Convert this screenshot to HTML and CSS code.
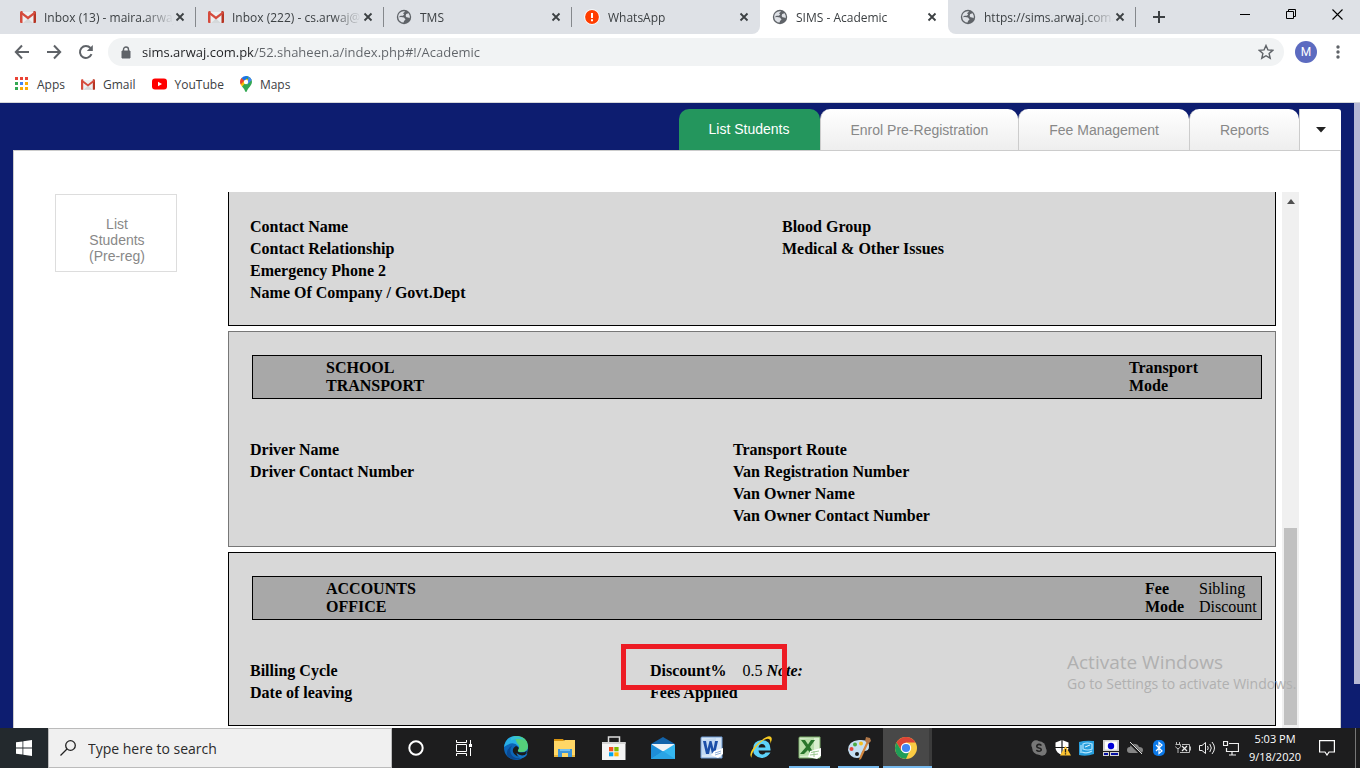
FILE: index.html
```html
<!DOCTYPE html>
<html lang="en">
<head>
<meta charset="utf-8">
<title>SIMS - Academic</title>
<link rel="stylesheet" href="styles.css">
</head>
<body>
<svg class="defs" aria-hidden="true">
  <symbol id="gmail" viewBox="0 0 16 12"><path d="M1 1h14v11H1z" fill="#eceff1"/><path d="M3 12l5-4.500 5 4.500z" fill="#d5d8da"/><path d="M0 1.500Q0 0 1.500 0H2.500V12H1Q0 12 0 11z" fill="#d54b3d"/><path d="M16 1.500Q16 0 14.500 0H13.500V12H15Q16 12 16 11z" fill="#b63524"/><path d="M1 .3L8 5.600 15 .3 15.600 2.600 8 8.400 .4 2.600z" fill="#d54b3d"/></symbol>
  <symbol id="globe" viewBox="0 0 16 16"><circle cx="8" cy="8" r="7.200" fill="#5f6368"/><path d="M9.200 2.400L7 4.200 8.200 5.200 7 6.800H4.600L2.500 8.300 5 8.100 8 8.400 9.500 10.500 8 12 7.600 13.600Q3 13.200 2.200 8.500V7Q3 2.600 7.500 2.200zM10.200 5L12.600 4.200Q14.400 6.800 13.600 9.300L12.200 8.400 10.500 8.200 9.600 6.900z" fill="#dee1e6"/></symbol>
  <symbol id="close" viewBox="0 0 10 10"><path d="M1.500 1.500l7 7M8.500 1.500l-7 7" stroke="#3c4043" stroke-width="1.800" fill="none"/></symbol>
</svg>

<header class="browser">
  <div class="tabstrip">
    <div class="tab"><svg class="fav gm"><use href="#gmail"/></svg><a class="tab-title" href="#t1">Inbox (13) - maira.arwaj</a><button class="tab-close" aria-label="Close tab"><svg><use href="#close"/></svg></button></div>
    <div class="tab"><svg class="fav gm"><use href="#gmail"/></svg><a class="tab-title" href="#t2">Inbox (222) - cs.arwaj@</a><button class="tab-close" aria-label="Close tab"><svg><use href="#close"/></svg></button></div>
    <div class="tab"><svg class="fav"><use href="#globe"/></svg><a class="tab-title" href="#t3">TMS</a><button class="tab-close" aria-label="Close tab"><svg><use href="#close"/></svg></button></div>
    <div class="tab before-active"><svg class="fav" viewBox="0 0 16 16"><circle cx="8" cy="8" r="7.800" fill="#fff"/><circle cx="8" cy="8" r="6.900" fill="#ff3d00"/><path d="M7 4h2v5H7zM7 10.200h2v2H7z" fill="#fff"/></svg><a class="tab-title" href="#t4">WhatsApp</a><button class="tab-close" aria-label="Close tab"><svg><use href="#close"/></svg></button></div>
    <div class="tab active"><svg class="fav"><use href="#globe"/></svg><a class="tab-title" href="#t5">SIMS - Academic</a><button class="tab-close" aria-label="Close tab"><svg><use href="#close"/></svg></button></div>
    <div class="tab after-active"><svg class="fav"><use href="#globe"/></svg><a class="tab-title" href="#t6">https://sims.arwaj.com.p</a><button class="tab-close" aria-label="Close tab"><svg><use href="#close"/></svg></button></div>
    <button class="new-tab" aria-label="New tab"><svg width="12" height="12"><path d="M6 0v12M0 6h12" stroke="#3c4043" stroke-width="2"/></svg></button>
    <div class="window-controls">
      <button aria-label="Minimize"><svg width="10" height="10"><path d="M0 5.500h10" stroke="#000"/></svg></button>
      <button aria-label="Restore"><svg width="10" height="10" fill="none" stroke="#000"><path d="M.5 2.500h7v7h-7zM2.500 2.500v-2h7v7h-2"/></svg></button>
      <button aria-label="Close"><svg width="11" height="11"><path d="M.5 .5l10 10M10.500 .5l-10 10" stroke="#000" stroke-width="1.100"/></svg></button>
    </div>
  </div>
  <div class="toolbar">
    <button class="tool" aria-label="Back"><svg viewBox="0 0 16 16"><path d="M15 8H2M8 1.500L1.800 8 8 14.500" /></svg></button>
    <button class="tool" aria-label="Forward"><svg viewBox="0 0 16 16"><path d="M1 8h13M8 1.500L14.200 8 8 14.500"/></svg></button>
    <button class="tool" aria-label="Reload"><svg viewBox="0 0 16 16"><path d="M13.500 10.200A6 6 0 1 1 12.500 4"/><path d="M14.800 1v6H8.800z" fill="#5f6368" stroke="none"/></svg></button>
    <div class="omnibox">
      <svg class="lock" viewBox="0 0 10 13"><path d="M1 5h8v7H1z" fill="#5f6368" stroke="#5f6368"/><path d="M2.500 5V3.500a2.500 2.500 0 0 1 5 0V5" fill="none" stroke="#5f6368" stroke-width="1.400"/></svg>
      <input class="url" aria-label="Address" value="sims.arwaj.com.pk/52.shaheen.a/index.php#!/Academic">
      <button class="star" aria-label="Bookmark this page"><svg viewBox="0 0 16 16"><path d="M8 1.500l1.900 4.400 4.900.4-3.700 3.200 1.100 4.700L8 11.700l-4.200 2.500 1.100-4.700L1.200 6.300l4.900-.4z" fill="none" stroke="#5f6368" stroke-width="1.400"/></svg></button>
    </div>
    <button class="avatar" aria-label="Profile">M</button>
    <button class="kebab" aria-label="Menu"><svg width="4" height="14" fill="#5f6368"><circle cx="2" cy="2" r="1.700"/><circle cx="2" cy="7" r="1.700"/><circle cx="2" cy="12" r="1.700"/></svg></button>
  </div>
  <nav class="bookmarks">
    <a href="#apps"><svg width="14" height="14" viewBox="0 0 14 14"><path d="M0 0h3v3H0zM5 0h3v3H5zM10 0h3v3h-3z" fill="#ea4335"/><path d="M0 5h3v3H0z" fill="#34a853"/><path d="M5 5h3v3H5z" fill="#4285f4"/><path d="M10 5h3v3h-3zM5 10h3v3H5zM10 10h3v3h-3z" fill="#fbab05"/><path d="M0 10h3v3H0z" fill="#34a853"/></svg>Apps</a>
    <a href="#gmail"><svg width="14" height="11"><use href="#gmail"/></svg>Gmail</a>
    <a href="#youtube"><svg width="15" height="12" viewBox="0 0 15 12"><rect y=".5" width="15" height="11" rx="3" fill="red"/><path d="M6 3.700v4.600L10 6z" fill="#fff"/></svg>YouTube</a>
    <a href="#maps"><svg width="12" height="16" viewBox="0 0 12 16"><path d="M6 0a6 6 0 0 1 6 6q0 2-2 4.500Q7.500 13 6.700 15.500q-.7 1-1.400 0Q4.500 13 2 10.500z" fill="#34a853"/><path d="M2 10.500Q0 8 0 6l1.500-4L9 3.500z" fill="#fbbc04"/><path d="M0 6q0-2.500 1.500-4L4.500 4.500 .7 8.500z" fill="#ea4335"/><path d="M1.500 2Q3.500 0 6 0q1.300 0 2.500.5L4.500 5z" fill="#1a73e8"/><path d="M8.500 .5Q11 1.500 11.700 4L7 9z" fill="#4285f4"/><circle cx="6" cy="6" r="2.200" fill="#fff"/></svg>Maps</a>
  </nav>
</header>

<main class="page">
  <div class="page-body">
    <nav class="site-tabs">
      <a class="site-tab current" href="#list">List Students</a>
      <a class="site-tab" href="#enrol">Enrol Pre-Registration</a>
      <a class="site-tab" href="#fee">Fee Management</a>
      <a class="site-tab" href="#reports">Reports</a>
      <button class="site-more" aria-label="More"><svg width="10" height="6"><path d="M0 0h10L5 5.500z" fill="#222"/></svg></button>
    </nav>
    <div class="panel">
      <aside class="side"><a class="side-link" href="#prereg">List<br>Students<br>(Pre-reg)</a></aside>
      <div class="sheet">
        <section class="card contact">
          <div class="fields wide">
            <div><p>Contact Name</p><p>Contact Relationship</p><p>Emergency Phone 2</p><p>Name Of Company / Govt.Dept</p></div>
            <div><p>Blood Group</p><p>Medical &amp; Other Issues</p></div>
          </div>
        </section>
        <section class="card transport">
          <div class="bar"><h2>SCHOOL<br>TRANSPORT</h2><b class="transport-mode">Transport<br>Mode</b></div>
          <div class="fields mid">
            <div><p>Driver Name</p><p>Driver Contact Number</p></div>
            <div><p>Transport Route</p><p>Van Registration Number</p><p>Van Owner Name</p><p>Van Owner Contact Number</p></div>
          </div>
        </section>
        <section class="card accounts">
          <div class="bar"><h2>ACCOUNTS<br>OFFICE</h2><b class="fee-mode">Fee<br>Mode</b><span class="sibling">Sibling<br>Discount</span></div>
          <div class="fields narrow">
            <div><p>Billing Cycle</p><p>Date of leaving</p></div>
            <div class="discount"><p>Discount% <span class="value">0.5</span> <i>Note:</i></p><p>Fees Applied</p><span class="highlight"></span></div>
          </div>
        </section>
      </div>
      <div class="scroll"><svg width="8" height="5"><path d="M0 5L4 0l4 5z" fill="#505050"/></svg><div class="thumb"></div></div>
    </div>
  </div>
  <div class="page-scroll"></div>
  <div class="watermark"><p class="wm-title">Activate Windows</p><p class="wm-text">Go to Settings to activate Windows.</p></div>
</main>

<footer class="taskbar">
  <button class="start" aria-label="Start"><svg width="16" height="16" fill="#fff"><path d="M0 2.300L6.500 1.400v6.200H0zM7.300 1.200L16 0v7.600H7.300zM0 8.400h6.500v6.200L0 13.700zM7.300 8.400H16V16l-8.700-1.200z"/></svg></button>
  <label class="search"><svg width="16" height="16" fill="none" stroke="#222" stroke-width="1.300"><circle cx="10.500" cy="5.500" r="4.800"/><path d="M7 9L.5 15.500"/></svg><input placeholder="Type here to search" aria-label="Search"></label>
  <button class="sys" aria-label="Cortana"><svg width="16" height="16"><circle cx="8" cy="8" r="6.700" fill="none" stroke="#fff" stroke-width="2"/></svg></button>
  <button class="sys" aria-label="Task view"><svg width="16" height="16" fill="none" stroke="#fff"><path d="M.5 0v2.500h10V0M.5 16v-2.500h10V16M.5 4.500h10v7H.5zM14.500 0v4M14.500 8v8"/><path d="M13 4h3v3h-3z" fill="#fff" stroke="none"/></svg></button>
  <div class="apps">
    <button aria-label="Edge"><svg viewBox="0 0 24 24"><circle cx="12" cy="12" r="12" fill="#0c65b8"/><path d="M0 11Q2 0 12 0t12 10q0 6-7 6-4 0-3-2 2-2 0-4Q9 4 0 11z" fill="#28afe6"/><path d="M10 0q13-1 14 10 0 6-7 6-4 0-3-2 3-4-1-7z" fill="#55d07a"/><path d="M7 1.200Q16-2 21 5q-5-4-14-.5z" fill="#35c1d8"/><path d="M14 14q-1 2 3 2.500 4 0 6-1.500-1 4-4.500 6Q11 21 9 16q-1-4 3-6 4 1 2 4z" fill="#1b1b1b"/><path d="M8 9.500q-4 6 1 11 4 3 9 .5Q10 27 3.500 20 1 14 8 9.500z" fill="#0b4a92"/><path d="M12.500 17q5 4.500 11 .5-1 3-5 4.500-5 0-6-5z" fill="#1676c6"/></svg></button>
    <button aria-label="File Explorer"><svg viewBox="0 0 24 24"><path d="M1 3h9l2 3H1z" fill="#d89410"/><path d="M1 5h9l2-1h10v17H1z" fill="#ffd766"/><path d="M5 21v-8h14v8h-4v-4H9v4z" fill="#3e95d8"/><path d="M7 13h10v2H7z" fill="#75c1ee"/><path d="M1 19h4v2H1zM19 19h3v2h-3z" fill="#e9b83c"/></svg></button>
    <button aria-label="Store"><svg viewBox="0 0 24 24"><path d="M6.500 7V1h11v6" fill="none" stroke="#ddd" stroke-width="1.500"/><path d="M0 6h23.500v18H0z" fill="#f4f4f4"/><path d="M0 6h23.500v2H0z" fill="#d5d5d5"/><path d="M7 11h4.300v4.300H7z" fill="#f25022"/><path d="M12.300 11h4.300v4.300h-4.300z" fill="#7fba00"/><path d="M7 16.300h4.300v4H7z" fill="#00a4ef"/><path d="M12.300 16.300h4.300v4h-4.300z" fill="#ffb900"/></svg></button>
    <button aria-label="Mail"><svg viewBox="0 0 24 24"><path d="M0 8l12-7 12 7v4H0z" fill="#1363a9"/><path d="M1 8h22v9H1z" fill="#f1f3f5"/><path d="M0 8l24 15H0z" fill="#1e8ed8"/><path d="M24 8v15H0z" fill="#35b7f0"/><path d="M0 23l12-8 12 8z" fill="#2aa4e5"/></svg></button>
    <button aria-label="Word"><svg viewBox="0 0 24 24"><path d="M1 2q0-1 1-1h20v21H1z" fill="#d5e5f6" stroke="#6f9bd4"/><path d="M2 4l14-2v16L2 19z" fill="#c3daf3"/><path d="M3 5h3l1.500 8L9.500 5h2l2 8L15 5h3l-3 13h-3l-1.500-7L9 18H6z" fill="#1b4fa8"/><path d="M14 15l9-3v6l-5 4-7-3z" fill="#fff"/><path d="M15 17l6-2M15 19l6-2" stroke="#8fb0dc"/></svg></button>
    <button aria-label="Internet Explorer"><svg viewBox="0 0 24 24"><path d="M21.500 16.500Q18 22 12.500 22 4 21 4 13T12.500 4Q22 4 21.500 14.500H9.500q.5 4 4 4 2 0 3-2z" fill="#5dd2fa"/><path d="M9.500 11.500h7q-.5-3.500-3.500-3.500t-3.500 3.500z" fill="#1b1b1b"/><path d="M3 22q-5-4 5-14Q19-2 22 1q2 2-1 7 1-4-1-5Q16 1 8 10q-7 9-5 12z" fill="#f8cb23"/></svg></button>
    <button class="running" aria-label="Excel"><svg viewBox="0 0 24 24"><path d="M1 2q0-1 1-1h20v21H1z" fill="#d9efcf" stroke="#78aa67"/><path d="M2 3l14-1v17L2 20z" fill="#b9dfab"/><path d="M3 4h4l3 4.500L13 4h4l-5 7 5 8h-4l-3-5-4 4H2l6-7z" fill="#28752b"/><path d="M12 15l11-3v8l-4 3-9-2z" fill="#fff"/><path d="M13 16.500l8-1.500M12 19l8-1M16 15v6" stroke="#9cc892"/></svg></button>
    <button class="running" aria-label="Paint"><svg viewBox="0 0 24 24"><path d="M1 14Q1 5 12 4t10 7q0 4-5 4-3 0-2 4-1 3-5 3-7 0-9-8z" fill="#c5dff2"/><circle cx="4.500" cy="13" r="2" fill="#e8443b"/><circle cx="8" cy="8.500" r="2" fill="#49ab45"/><circle cx="14" cy="7.500" r="2" fill="#f2bf22"/><circle cx="10" cy="18" r="2" fill="#1b1b1b"/><path d="M20 5l2 1-8 17-2 1 1-4z" fill="#d4873e"/><path d="M19 1l4 1 1 3-3 3-3-3z" fill="#b27849"/></svg></button>
    <button class="running focused" aria-label="Chrome"><svg viewBox="0 0 24 24"><circle cx="12" cy="12" r="11" fill="#fbcb43"/><path d="M2.500 6.500Q6 1 12 1t9.500 5.500H12L7.200 14.500z" fill="#dc4437"/><path d="M2.500 6.500L7.500 15l8 0L12 23Q1 22 1 12q0-3 1.500-5.500z" fill="#1f9d58"/><circle cx="12" cy="12" r="5.200" fill="#fff"/><circle cx="12" cy="12" r="4.100" fill="#4285f4"/></svg></button>
  </div>
  <div class="tray">
    <svg viewBox="0 0 16 16"><circle cx="5" cy="5" r="4.700" fill="#777"/><circle cx="11" cy="11" r="4.700" fill="#777"/><circle cx="8" cy="8" r="6.800" fill="#777"/><path d="M10.500 5.500Q8 3.500 6 5.300 5 7.200 8 8q3 .6 2 2.500-2 1.700-4.700-.3" fill="none" stroke="#222" stroke-width="1.600"/></svg>
    <svg viewBox="0 0 16 16"><path d="M7 0l6.500 2.500V8Q13 13 7 15 1 13 .5 8V2.500z" fill="#fff"/><path d="M7 0v15M0 7.500h14" stroke="#1b1b1b" stroke-width="1.200"/><path d="M10.500 6L16 15.500H5z" fill="#fdc431"/><path d="M10.500 9v3.500M10.500 13.300v1.300" stroke="#222" stroke-width="1.300"/></svg>
    <svg viewBox="0 0 16 16"><path d="M0 2Q6 0 15 1v13q-8 3-15 1z" fill="#289edc"/><path d="M4 4q4-2 9 0v5q-4 2-9 0zM3 12q5 2 10-1M2 5v8" fill="none" stroke="#b4e6ff" stroke-width="1.200"/><path d="M6 7l5-2" stroke="#eaf9ff"/></svg>
    <svg viewBox="0 0 16 16"><path d="M0 0h16v11H0zM0 12h6v4H0zM7 12h9v4H7z" fill="#d3d3d3"/><path d="M2 1.500h12v8H2z" fill="#fff"/><circle cx="8" cy="6" r="3.200" fill="#0000d8"/><path d="M1 13h4v2H1zM8 13h7v2H8z" fill="#0712a3"/></svg>
    <svg viewBox="0 0 16 16"><path d="M3 13Q0 13 0 10q0-3 3-3 1-4 5-3 3 0 4 3 4 0 4 3t-3 3z" fill="#858585"/><path d="M2 2l13 13" stroke="#1b1b1b" stroke-width="2.500"/><path d="M3 2l12 12" stroke="#ddd"/></svg>
    <svg viewBox="0 0 16 16"><rect x="2" width="12" height="16" rx="5" fill="#0a78e8"/><path d="M5 5l6 6-3 2.500v-11L11 5l-6 6" fill="none" stroke="#fff" stroke-width="1.200"/></svg>
    <svg viewBox="0 0 16 16" fill="none" stroke="#eee"><path d="M1.500 2v2M4.500 2v2M.5 4.500h5v2L4 8.500H2L.5 6.500M3 8.500V13M7 4.500h7.500v8H5M15.500 6.500v4" stroke="#bbb"/><path d="M7 6l5 5M12 6l-5 5" stroke-width="1.300"/></svg>
    <svg viewBox="0 0 16 16" fill="none" stroke="#eee"><path d="M.5 5.500h2.500L6.500 2.500v11L3 10.500H.5zM8.500 6q1.500 2 0 4M10.800 4q3 4 0 8M13 2q5 6 0 12"/></svg>
    <svg viewBox="0 0 16 16" fill="none" stroke="#eee"><path d="M6 3.500h9.500v8H3.500V8M.5 1.500h4v4h-4zM9 11.500v3M6 15h7" stroke-width="1.200"/></svg>
  </div>
  <div class="clock">5:03 PM<br>9/18/2020</div>
  <button class="notes" aria-label="Notifications"><svg width="16" height="16" fill="none" stroke="#fff" stroke-width="1.200"><path d="M.6.600h14.800v11.400H10L8 15l-2-3H.6z"/></svg></button>
  <div class="peek"></div>
</footer>
</body>
</html>
```
FILE: styles.css
```css
* { box-sizing: border-box; }
body {
  margin: 0;
  height: 100vh;
  display: flex;
  flex-direction: column;
  overflow: hidden;
  font-family: "Open Sans", "Noto Sans", sans-serif;
  font-size: 12px;
}
p, h2 { margin: 0; }
a { color: inherit; text-decoration: none; }
button { border: 0; padding: 0; background: none; font: inherit; color: inherit; display: flex; align-items: center; justify-content: center; }
input { border: 0; padding: 0; background: none; font: inherit; outline: 0; min-width: 0; }
svg { display: block; flex: none; }
.defs { position: absolute; width: 0; height: 0; }

/* browser chrome */
.browser { background: #fff; color: #3c4043; border-bottom: 1px solid #d5d7d9; }
.tabstrip { display: flex; height: 34px; background: #fff; }
.tab {
  flex: 0 1 188px;
  min-width: 0;
  display: flex;
  align-items: center;
  padding: 0 11px 0 12px;
  background: linear-gradient(#85888c, #85888c) right center / 1px 20px no-repeat #dee1e6;
}
.tab:first-child { box-sizing: content-box; flex-basis: 165px; border-left: 8px solid #dee1e6; }
.tab.before-active { background: #dee1e6; border-radius: 0 0 8px 0; }
.tab.after-active { border-radius: 0 0 0 8px; }
.tab.active { background: #fff; border-radius: 8px 8px 0 0; position: relative; }
.tab.active::before { content: ""; position: absolute; inset: 0 0 20px; background: #dee1e6; z-index: -1; }
.fav { width: 16px; height: 16px; }
.fav.gm { height: 12px; }
.tab-title { flex: 1; min-width: 0; margin: 0 0 0 8px; overflow: hidden; white-space: nowrap; mask-image: linear-gradient(90deg, #000 100px, transparent 130px); }
.tab-close { width: 10px; height: 10px; }
.tab-close svg { width: 10px; height: 10px; }
.new-tab { width: 45px; background: #dee1e6; }
.window-controls { flex: 1; display: flex; justify-content: flex-end; background: #dee1e6; }
.window-controls button { width: 46px; height: 28px; }

.toolbar { display: flex; align-items: center; height: 36px; padding: 0 12px 0 6px; }
.tool { width: 32px; height: 32px; }
.tool svg { width: 16px; height: 16px; fill: none; stroke: #5f6368; stroke-width: 2; }
.omnibox { flex: 1; display: flex; align-items: center; height: 28px; margin-left: 6px; padding: 0 10px 0 13px; background: #f1f3f4; border-radius: 14px; }
.lock { width: 10px; height: 13px; margin-right: 11px; }
.url { flex: 1; font-size: 13px; color: transparent; background: linear-gradient(90deg, #202124 112px, #5f6368 112px); background-clip: text; }
.star svg { width: 16px; height: 16px; }
.avatar { width: 22px; height: 22px; margin: 0 11px; border-radius: 50%; background: #5c6bc0; color: #fff; font-family: Roboto, sans-serif; }
.kebab { width: 20px; height: 28px; }

.bookmarks { display: flex; align-items: center; gap: 16px; height: 32px; padding: 0 15px 4px; }
.bookmarks a { display: flex; align-items: center; gap: 8px; }

/* site */
.page { flex: 1; min-height: 0; display: flex; position: relative; background: #0d1d70; }
.page-body { flex: 1; min-width: 0; display: flex; flex-direction: column; padding: 6px 13px 0; }
.page-scroll { width: 6px; margin-bottom: 44px; background: #b5b8d5; }
.site-tabs { display: flex; justify-content: flex-end; height: 41px; font-family: "Liberation Sans", Arial, sans-serif; font-size: 14px; color: #888; }
.site-tab { display: flex; align-items: center; padding: 0 30px; background: linear-gradient(#fff, #eee); border-left: 1px solid #ccc; border-radius: 10px 10px 0 0; }
.site-tab.current { background: #24965d; color: #fff; border: 0; padding: 0 30px 2px; }
.site-more { width: 42px; background: #fff; border-left: 1px solid #ccc; border-radius: 0 3px 0 0; }
.panel { flex: 1; min-height: 0; display: flex; background: #fff; border: 1px solid #ccc; border-bottom: 0; padding: 41px 41px 0; }
.side { width: 173px; padding-top: 2px; font-family: "Liberation Sans", Arial, sans-serif; font-size: 14px; line-height: 16px; color: #888; }
.side-link { display: block; width: 122px; padding: 21px 0 7px 2px; border: 1px solid #ddd; text-align: center; }

.sheet { flex: 1; min-width: 0; overflow: hidden; display: flex; flex-direction: column; gap: 5px; font: 16px/22px "Liberation Serif", "Times New Roman", serif; color: #000; }
.card { flex: none; border: 1px solid #000; background: #d8d8d8; }
.contact { border-top: 0; padding: 24px 0 21px; }
.transport { border-color: #777; padding: 23px 0 19px; }
.accounts { padding: 23px 0 21px; }
.bar { display: flex; margin: 0 13px 40px 23px; padding: 3px 4px 3px 73px; border: 1px solid #000; background: #a8a8a8; line-height: 18px; }
.bar h2 { flex: 1; font-size: 16px; font-weight: bold; }
.transport-mode { width: 128px; }
.fee-mode { width: 54px; }
.sibling { width: 58px; }
.fields { display: grid; padding-left: 21px; font-weight: bold; }
.fields.wide { grid-template-columns: 532px 1fr; }
.fields.mid { grid-template-columns: 483px 1fr; }
.fields.narrow { grid-template-columns: 400px 1fr; }
.discount { position: relative; }
.discount .value { font-weight: normal; margin-left: 12px; }
.highlight { position: absolute; left: -29px; top: -16px; width: 166px; height: 46px; border: 5px solid #ed1c24; }

.scroll { width: 17px; margin-left: 6px; padding: 7px 2px 3px; background: #f0f0f0; display: flex; flex-direction: column; align-items: center; justify-content: space-between; }
.thumb { width: 13px; height: 197px; background: #c1c1c1; }

.watermark { position: absolute; right: 57px; bottom: 34px; width: 236px; color: #b0b0b0; white-space: nowrap; }
.wm-title { font-size: 19px; line-height: 24px; }
.wm-text { font-size: 14px; line-height: 20px; }

/* taskbar */
.taskbar { display: flex; height: 40px; background: #1d1d1e; color: #fff; }
.start { width: 48px; background: #23292d; }
.search { width: 344px; display: flex; align-items: center; gap: 12px; padding: 0 11px; background: #f0f0f0; border: 1px solid #bbb; }
.search input { flex: 1; font-size: 14px; }
.search input::placeholder { color: #2b2b2b; opacity: 1; }
.sys { width: 48px; }
.apps { display: flex; margin-left: 3px; }
.apps button { width: 49px; position: relative; }
.apps svg { width: 24px; height: 24px; }
.apps .running::after { content: ""; position: absolute; left: 4px; right: 4px; bottom: 0; height: 2px; background: #76b9ed; }
.apps .focused { background: #484848; border-right: 3px solid #3b3b3b; }
.apps .focused::after { left: 0; right: -3px; }
.tray { flex: 1; display: flex; align-items: center; justify-content: flex-end; gap: 8px; }
.tray svg { width: 16px; height: 16px; }
.clock { width: 72px; text-align: center; font-size: 11px; line-height: 18px; padding-top: 2px; }
.notes { width: 32px; }
.peek { width: 5px; margin-left: 12px; border-left: 1px solid #777; }
```
